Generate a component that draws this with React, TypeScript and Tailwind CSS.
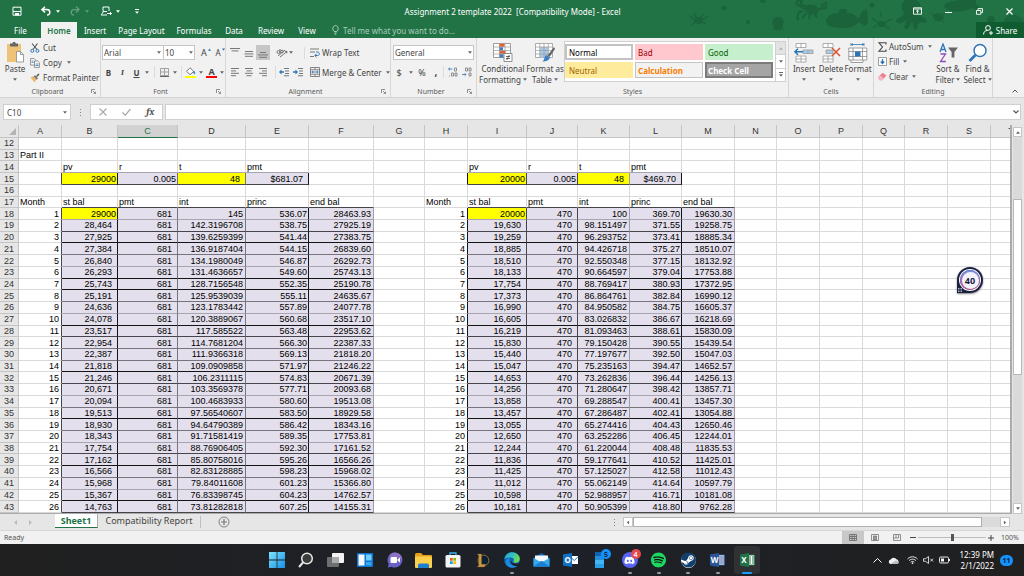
import React from "react";
import { FaSpotify, FaSteam, FaDiscord } from "react-icons/fa";

type Tone = "none" | "light" | "mid" | "dark" | "black";

/* ---------- shared bits ---------- */

const Caret = ({ className = "" }: { className?: string }) => (
  <svg viewBox="0 0 5 3" className={"h-[3px] w-[4px] shrink-0 " + className} aria-hidden="true">
    <path d="M0 0h5L2.5 3z" fill="#666" />
  </svg>
);

const Launcher = () => (
  <svg viewBox="0 0 5 5" className="size-[5px] shrink-0" fill="none" stroke="#777" strokeWidth="0.8" aria-hidden="true">
    <path d="M0.5 4V0.5H4M2 2l2.5 2.5M4.6 2.6v2h-2" />
  </svg>
);

const Group = ({
  label,
  className,
  launcher = false,
  children,
}: {
  label: string;
  className: string;
  launcher?: boolean;
  children: React.ReactNode;
}) => (
  <section
    aria-label={label}
    className={"flex shrink-0 flex-col border-r border-[#d6d6d6] " + className}
  >
    <div className="flex h-[48px] items-start">{children}</div>
    <div className="flex h-[11px] items-center px-1 text-[7px] text-[#5c5c5c]">
      <span className="flex-1 text-center">{label}</span>
      {launcher && <Launcher />}
    </div>
  </section>
);

const Lines = ({ widths, top = 0 }: { widths: [number, number][]; top?: number }) => (
  <svg viewBox="0 0 10 10" className="size-[10px]" aria-hidden="true">
    {widths.map(([x, w], i) => (
      <rect key={i} x={x} y={top + i * 2.4} width={w} height="1" fill="#777" />
    ))}
  </svg>
);

const Rule = () => <span className="h-3 w-px shrink-0 bg-[#dcdcdc]" />;

/* ---------- title bar ---------- */

const SeaLife = () => (
  <svg viewBox="0 0 334 38" className="h-[38px] w-[334px]" fill="#1a633b" aria-hidden="true">
    <path d="M4 19c3-3 7-3 9 0 0 4-2 5-4 5s-5-1-5-5z" />
    <path d="M4 19l-5-4M5 22l-3 3M13 19l5-3M12 22l4 2M6 17l-2-4M11 17l3-3" fill="none" stroke="#1a633b" strokeWidth="1.200" />
    <circle cx="34" cy="8" r="2.500" />
    <circle cx="58" cy="22" r="2" />
    <circle cx="73" cy="0" r="3" />
    <circle cx="108" cy="19" r="1.500" />
    <circle cx="144" cy="19" r="3" />
    <circle cx="182" cy="5" r="2.500" />
    <circle cx="227" cy="19" r="5" />
    <g transform="translate(-9 -2)">
      <path d="M124 12c0-5 4-6 8-5 5 1 7 5 5 8s-11 2-13-3z" />
      <path d="M124 11l-9-5 2-4 4 1-2 3 7 3M137 11l8-1 0-5-4 2 1 4M122 13l-4 1-2 6M125 15l-4 6M129 16l-1 5M134 16l2 4" fill="none" stroke="#1a633b" strokeWidth="2" />
    </g>
    <path d="M84 28c-3-5-2-11 4-11s7 6 4 10l2 3-3-1-1 2-2-2-2 2-1-2-3 1z" />
    <path d="M136 21c0-6 8-8 12-8l2-4h7v4c7 0 9 4 12 5l3-7 5-1 1 13-3 3-6-4c-5 5-10 6-16 6-10 0-17-2-17-7z" />
    <path d="M187 23c3-3 7-2 9 0 0 3-3 4-4 4s-4 0-5-4z" />
    <path d="M187 22l-5-4M196 22l6-3M187 25l-4 3M195 26l5 3M191 17v-5" fill="none" stroke="#1a633b" strokeWidth="1.200" />
    <path d="M214 13c-5-8-1-14 7-14s12 6 8 13c1 6 7 5 8 9-2 4-8 0-10-1 1 4 1 8-1 10-3-1-3-6-4-9-2 4-3 9-7 8-2-3 1-6 2-10-4 4-9 6-11 2 1-4 7-3 8-8z" />
    <path d="M243 16c4-4 9-2 10 1s-4 5-7 3zM244 16l-4-4M252 15l5-3M246 20l-3 3M251 20l4 3" stroke="#1a633b" strokeWidth="1" />
    <path d="M254 6c2-4 8-5 12-5l3-4h12c4 1 6 4 5 7l4 3-3 3-6-2c-6 5-24 5-27-2z" />
    <circle cx="301" cy="20" r="4" />
    <path d="M314 20c3-6 11-7 16-3 5 3 6 10 5 19h-15c-6-4-9-10-6-16z" opacity=".8" />
  </svg>
);

const TitleBar = () => (
  <header className="relative h-[38px] shrink-0 bg-[#217346] text-white">
    <div className="absolute top-0 right-0 overflow-hidden">
      <SeaLife />
    </div>
    <div className="relative flex h-[22px] items-center">
      <div className="flex flex-1 items-center pl-[12px]">
        <button aria-label="Save" className="size-[10px]">
          <svg viewBox="0 0 10 10" fill="none" stroke="#fff" strokeWidth="1">
            <path d="M1 1.2h8v8H1z M1 5.5h8" />
            <path d="M3 7h4v2.4H3z" fill="#fff" stroke="none" />
          </svg>
        </button>
        <button aria-label="Undo" className="ml-[19px] h-[10px] w-[10px]">
          <svg viewBox="0 0 10 10" fill="none" stroke="#fff" strokeWidth="1.5">
            <path d="M4 0.8L1 3.6l3 2.8M1.2 3.6h4.6c4 0 4 5.4.2 5.4" />
          </svg>
        </button>
        <svg viewBox="0 0 5 3" className="ml-[5px] h-[3px] w-[4px]"><path d="M0 0h5L2.5 3z" fill="#fff" /></svg>
        <button aria-label="Redo" className="ml-[10px] size-[10px] opacity-30">
          <svg viewBox="0 0 10 10" fill="none" stroke="#fff" strokeWidth="1.4">
            <path d="M6 0.8l3 2.8-3 2.8M8.800 3.600H4.200c-4 0-4 5.400-.2 5.400" />
          </svg>
        </button>
        <svg viewBox="0 0 5 3" className="ml-[5px] h-[3px] w-[4px] opacity-30"><path d="M0 0h5L2.5 3z" fill="#fff" /></svg>
        <button aria-label="Touch mode" className="ml-[12px] h-[10px] w-[11px]">
          <svg viewBox="0 0 11 10" fill="none" stroke="#fff" strokeWidth="1">
            <path d="M2 5.500V1h6v4M2 5.500h4M0.500 8.500l2-3M0 9h6M6 7.500h4.500M9 6l1.500 1.500L9 9" />
          </svg>
        </button>
        <svg viewBox="0 0 5 3" className="ml-[4px] h-[3px] w-[4px]"><path d="M0 0h5L2.5 3z" fill="#fff" /></svg>
        <svg viewBox="0 0 4 5" className="ml-[15px] h-[5px] w-[4px]"><path d="M0 0h4v1H0zM0 2.500h4L2 4.800z" fill="#fff" /></svg>
      </div>
      <h1 className="text-[8px] whitespace-pre">Assignment 2 template 2022  [Compatibility Mode] - Excel</h1>
      <div className="flex flex-1 items-center justify-end pr-[11px]">
        <button aria-label="Ribbon display options" className="h-[8px] w-[9px]">
          <svg viewBox="0 0 9 8" fill="none" stroke="#fff" strokeWidth="0.9">
            <path d="M0.5 0.8h8v6.4h-8zM0.5 2h8M4.5 6.5V3.4M3 4.6l1.500-1.400L6 4.600" />
          </svg>
        </button>
        <button aria-label="Minimize" className="ml-[23px] h-[8px] w-[7px]">
          <svg viewBox="0 0 7 8"><path d="M0 5h7v1H0z" fill="#fff" /></svg>
        </button>
        <button aria-label="Restore" className="ml-[24px] size-[7px]">
          <svg viewBox="0 0 7 7" fill="none" stroke="#fff" strokeWidth="0.9">
            <path d="M0.500 2.500h4.300v3.800H0.500zM2 2.400V.6h4.500v4H5" />
          </svg>
        </button>
        <button aria-label="Close" className="ml-[23px] size-[7px]">
          <svg viewBox="0 0 7 7" stroke="#fff" strokeWidth="1.200"><path d="M.5.5l6 6M6.500.5l-6 6" /></svg>
        </button>
      </div>
    </div>
    <nav aria-label="Ribbon tabs" className="relative flex h-[16px] items-stretch text-[8px]">
      <button className="w-[41px]">File</button>
      <button className="w-[36px] bg-[#f1f1f1] font-semibold text-[#217346]">Home</button>
      <button className="w-[36px]">Insert</button>
      <button className="w-[57px]">Page Layout</button>
      <button className="w-[48px]">Formulas</button>
      <button className="w-[32px]">Data</button>
      <button className="w-[42px]">Review</button>
      <button className="w-[30px]">View</button>
      <button className="ml-[10px] flex items-center gap-[4px] text-[#a9cdb8]">
        <svg viewBox="0 0 7 10" className="h-[10px] w-[7px]" fill="none" stroke="#b5d5c2" strokeWidth="0.9">
          <path d="M2.200 6.500C.2 5 .3.600 3.500.600s3.300 4.400 1.300 5.900zM2.300 8h2.400M2.800 9.300h1.400" />
        </svg>
        Tell me what you want to do...
      </button>
      <button className="ml-auto flex w-[48px] items-center justify-center gap-[3px] bg-[#0f5c30]">
        <svg viewBox="0 0 10 10" className="size-[10px]" fill="none" stroke="#fff" strokeWidth="1">
          <circle cx="5" cy="3" r="2.400" />
          <path d="M.6 9.500c0-2.600 1.500-4 3.600-4M6 8h4M8 6v4" />
        </svg>
        Share
      </button>
    </nav>
  </header>
);

/* ---------- ribbon ---------- */

const SmallButton = ({ icon, text, caret, gap = "gap-[3px]" }: { icon: React.ReactNode; text: string; caret?: boolean; gap?: string }) => (
  <button className={"flex h-[15px] items-center whitespace-nowrap " + gap}>
    {icon}
    <span>{text}</span>
    {caret && <Caret className="ml-[2px]" />}
  </button>
);

const BigButton = ({ icon, lines, className, caretBelow = false }: { icon: React.ReactNode; lines: string[]; className: string; caretBelow?: boolean }) => (
  <button className={"flex shrink-0 flex-col items-center pt-[4px] whitespace-nowrap " + className}>
    <span className="flex h-[21px] items-center">{icon}</span>
    <span className="leading-[11px]">{lines[0]}</span>
    {caretBelow ? (
      <Caret className="mt-[4px]" />
    ) : (
      <span className="flex items-center gap-[2px] leading-[11px]">
        {lines[1]}
        <Caret />
      </span>
    )}
  </button>
);

const Ribbon = () => (
  <div className="flex h-[60px] shrink-0 overflow-hidden border-b border-[#d2d2d2] bg-[#f1f1f1] text-[8px] text-[#444]">
    <Group label="Clipboard" className="w-[101px]" launcher>
      <BigButton
        className="w-[30px]"
        lines={["Paste"]}
        caretBelow
        icon={
          <svg viewBox="0 0 20 21" className="h-[21px] w-[20px]">
            <rect x="2" y="2" width="14" height="18" fill="#eec377" />
            <path d="M5 1.500h2.500a1.600 1.600 0 0 1 3.200 0H13v3H5z" fill="#666" />
            <path d="M11.500 9.500h4l3 3v7.500h-7z" fill="#fff" stroke="#888" strokeWidth=".8" />
            <path d="M15.500 9.500v3h3" fill="none" stroke="#888" strokeWidth=".8" />
          </svg>
        }
      />
      <div className="flex flex-col pt-[2px]">
        <SmallButton
          text="Cut"
          icon={
            <svg viewBox="0 0 10 10" className="size-[10px]" fill="none">
              <path d="M2 .5l5 6M7.500.5L3 6.500" stroke="#555" strokeWidth="1.100" />
              <circle cx="2.300" cy="7.800" r="1.500" stroke="#2e75b6" />
              <circle cx="7.400" cy="7.800" r="1.500" stroke="#2e75b6" />
            </svg>
          }
        />
        <SmallButton
          text="Copy"
          caret
          icon={
            <svg viewBox="0 0 10 10" className="size-[10px]" fill="#fff" strokeWidth=".8">
              <path d="M.6.600h3.500l1.500 1.500v5H.6z" stroke="#777" />
              <path d="M4.500 3h3.200l1.700 1.700v4.700H4.500z" stroke="#777" />
              <path d="M5.500 6h3M5.500 7.500h3M1.600 3h2M1.600 4.500h2" stroke="#2e75b6" />
            </svg>
          }
        />
        <SmallButton
          text="Format Painter"
          icon={
            <svg viewBox="0 0 10 10" className="size-[10px]">
              <path d="M.5 4.500l3-1.200 3 3L4.500 9.500z" fill="#edb867" />
              <path d="M3.500 3.200l1.500-1 3 3-1.300 1.600z" fill="#777" />
              <path d="M6.500 3.500L9 1" stroke="#555" strokeWidth="1.500" />
            </svg>
          }
        />
      </div>
    </Group>

    <Group label="Font" className="w-[125px]" launcher>
      <div className="flex flex-col pt-[7px] pl-px">
        <div className="flex h-[15px]">
          <label className="relative flex">
            <select aria-label="Font" className="w-[62px] appearance-none border border-[#c6c6c6] bg-white px-px">
              <option>Arial</option>
            </select>
            <Caret className="absolute top-[6px] right-[3px]" />
          </label>
          <label className="relative flex">
            <select aria-label="Font size" className="w-[31px] appearance-none border border-l-0 border-[#c6c6c6] bg-white px-px">
              <option>10</option>
            </select>
            <Caret className="absolute top-[6px] right-[2px]" />
          </label>
          <button aria-label="Increase font size" className="ml-[5px] w-[8px] text-[9px]">A</button>
          <svg viewBox="0 0 4 3" className="mt-[3px] h-[3px] w-[3px]"><path d="M0 3l2-3 2 3z" fill="#2e75b6" /></svg>
          <button aria-label="Decrease font size" className="ml-[3px] w-[8px] text-[8px]">A</button>
          <svg viewBox="0 0 4 3" className="mt-[3px] h-[3px] w-[3px]"><path d="M0 0h4L2 3z" fill="#2e75b6" /></svg>
        </div>
        <div className="mt-[4px] flex h-[16px] items-center">
          <button className="w-[13px] font-bold">B</button>
          <button className="w-[15px] font-serif font-bold italic">I</button>
          <button className="w-[13px] font-bold underline">U</button>
          <Caret className="ml-[2px]" />
          <span className="w-[5px]" />
          <Rule />
          <button aria-label="Borders" className="ml-[5px]">
            <svg viewBox="0 0 9 9" className="size-[9px]" fill="none" stroke="#999" strokeWidth=".9">
              <path d="M.5.5h8v7h-8zM4.500.5v7M.5 4h8" /><path d="M0 8.500h9" stroke="#555" />
            </svg>
          </button>
          <Caret className="mx-[4px]" />
          <Rule />
          <button aria-label="Fill color" className="ml-[3px]">
            <svg viewBox="0 0 11 11" className="size-[11px]">
              <path d="M5 .8l3.800 3.700L5 7.600 1.500 4.300z" fill="#fff" stroke="#555" strokeWidth=".8" />
              <path d="M8.800 4c1 1 1.400 2.200.6 3-1-.5-1-2-.6-3z" fill="#2e75b6" stroke="#2e75b6" strokeWidth=".6" />
              <rect y="9" width="11" height="2" fill="#ff0" />
            </svg>
          </button>
          <Caret className="mx-[3px]" />
          <button aria-label="Font color" className="flex h-[11px] w-[11px] items-center justify-center border-b-2 border-[#f00] text-[9px] leading-[9px] font-bold">A</button>
          <Caret className="ml-[3px]" />
        </div>
      </div>
    </Group>

    <Group label="Alignment" className="w-[165px]" launcher>
      <div className="flex w-full flex-col pt-[7px] pl-[2px]">
        <div className="flex h-[15px] items-center">
          <button aria-label="Top align" className="flex w-[14px] justify-center"><Lines widths={[[0, 10], [1.5, 7]]} /></button>
          <button aria-label="Middle align" className="flex w-[14px] justify-center"><Lines top={3} widths={[[1, 8], [0.5, 9], [1, 8]]} /></button>
          <button aria-label="Bottom align" className="flex h-[15px] w-[14px] items-center justify-center bg-[#c6c6c6]"><Lines top={4} widths={[[2, 6], [0, 10], [1, 8]]} /></button>
          <button aria-label="Orientation" className="ml-[6px]">
            <svg viewBox="0 0 12 10" className="h-[10px] w-[12px]" fill="none" stroke="#666" strokeWidth=".9">
              <circle cx="2.500" cy="4" r="1.500" /><circle cx="6" cy="3.500" r="1.300" /><path d="M4 1v4.500M4 9L11 3.500M8.800 3.400L11 3.300l-.3 2M2 8l7-6" />
            </svg>
          </button>
          <Caret className="ml-px" />
          <span className="w-[11px]" />
          <Rule />
          <span className="ml-[5px]">
            <SmallButton
              gap="gap-[2px]"
              text="Wrap Text"
              icon={
                <svg viewBox="0 0 10 10" className="size-[10px]" fill="none" strokeWidth="1">
                  <path d="M0 1h9M0 4h5M0 8.500h4" stroke="#777" />
                  <path d="M6 4h1.500c2.500 0 2.500 3.500 0 3.500H5M6.500 5.800L4.800 7.500l1.700 1.700" stroke="#2e75b6" />
                </svg>
              }
            />
          </span>
        </div>
        <div className="mt-[4px] flex h-[16px] items-center">
          <button aria-label="Align left" className="flex w-[14px] justify-center"><Lines top={1} widths={[[1, 8], [1, 5], [1, 8], [1, 5]]} /></button>
          <button aria-label="Center" className="flex w-[14px] justify-center"><Lines top={1} widths={[[1, 8], [2.500, 5], [1, 8], [2.500, 5]]} /></button>
          <button aria-label="Align right" className="flex w-[14px] justify-center"><Lines top={1} widths={[[1, 8], [4, 5], [1, 8], [4, 5]]} /></button>
          <span className="w-[5px]" />
          <Rule />
          <button aria-label="Decrease indent" className="ml-[3px]">
            <svg viewBox="0 0 10 10" className="size-[10px]"><path d="M5 1h5v1H5zM6 3.500h4v1H6zM6 6h4v1H6zM5 8.300h5v1H5z" fill="#777" /><path d="M0 5l2.500-2.500v1.700H5v1.600H2.500v1.700z" fill="#2e75b6" /></svg>
          </button>
          <button aria-label="Increase indent" className="ml-[4px]">
            <svg viewBox="0 0 10 10" className="size-[10px]"><path d="M5 1h5v1H5zM6 3.500h4v1H6zM6 6h4v1H6zM5 8.300h5v1H5z" fill="#777" /><path d="M5 5L2.500 2.500v1.700H0v1.600h2.500v1.700z" fill="#2e75b6" /></svg>
          </button>
          <span className="ml-[7px]">
            <SmallButton
              gap="gap-[2px]"
              text="Merge & Center"
              caret
              icon={
                <svg viewBox="0 0 10 10" className="size-[10px]" fill="none" stroke="#777" strokeWidth=".9">
                  <path d="M.5.5h9v9h-9zM.5 2.800h9M.5 7.200h9M5 .5v2.300M5 7.200v2.300" />
                  <path d="M1.800 5h6.400M3 3.900L1.800 5 3 6.100M7 3.900L8.200 5 7 6.100" stroke="#2e75b6" />
                </svg>
              }
            />
          </span>
        </div>
      </div>
    </Group>

    <Group label="Number" className="w-[86px]" launcher>
      <div className="flex flex-col pt-[7px] pl-[2px]">
        <label className="relative flex h-[15px]">
          <select aria-label="Number format" className="w-[81px] appearance-none border border-[#c6c6c6] bg-white px-px">
            <option>General</option>
          </select>
          <Caret className="absolute top-[6px] right-[2px]" />
        </label>
        <div className="mt-[4px] flex h-[16px] items-center text-[9px]">
          <button className="w-[12px]">$</button>
          <Caret className="ml-[4px]" />
          <button className="ml-[4px] w-[10px]">%</button>
          <button className="ml-[3px] w-[12px] text-[10px] leading-[10px] font-bold">,</button>
          <span className="w-px" />
          <Rule />
          <button aria-label="Increase decimal" className="ml-[4px]">
            <svg viewBox="0 0 10 10" className="size-[10px]" fill="none" strokeWidth=".8"><path d="M4.500 2H.5M2 .7L.6 2 2 3.300" stroke="#2e75b6" /><path d="M6.500 1h2v3h-2zM3.500 6h2v3h-2zM7 6h2v3H7zM1.500 8.500v1" stroke="#777" /></svg>
          </button>
          <button aria-label="Decrease decimal" className="ml-[4px]">
            <svg viewBox="0 0 10 10" className="size-[10px]" fill="none" strokeWidth=".8"><path d="M0 7.500h4M2.700 6.200L4 7.500 2.700 8.800" stroke="#2e75b6" /><path d="M3.500 1h2v3h-2zM7 1h2v3H7zM7 6h2v3H7z" stroke="#777" /></svg>
          </button>
        </div>
      </div>
    </Group>

    <Group label="Styles" className="w-[312px]">
      <BigButton
        className="ml-[3px] w-[46px]"
        lines={["Conditional", "Formatting"]}
        icon={
          <svg viewBox="0 0 20 19" className="h-[19px] w-[20px]">
            <path d="M.5.5h17v14H.5z" fill="#fff" stroke="#888" strokeWidth=".8" />
            <path d="M.5 4h17M.5 7.500h17M.5 11h17M6.500.5v14M12 .5v14" stroke="#999" strokeWidth=".7" />
            <path d="M6.500.8h5v3h-5zM6.500 7.800h6v3h-6z" fill="#d9643a" />
            <path d="M6.500 4.200h3.500v3H6.500zM6.500 11.200h4v3.200h-4z" fill="#3f7ec2" />
            <path d="M11 10.500h8v8h-8z" fill="#fff" stroke="#777" strokeWidth=".8" />
            <path d="M13 13.500h4M13 15.500h4M16.300 12l-2.500 5" stroke="#444" strokeWidth=".8" />
          </svg>
        }
      />
      <BigButton
        className="w-[38px]"
        lines={["Format as", "Table"]}
        icon={
          <svg viewBox="0 0 20 19" className="h-[19px] w-[20px]">
            <path d="M.5.5h17v14H.5z" fill="#fff" stroke="#999" strokeWidth=".8" />
            <path d="M4.800 4h8.500v10.500H4.800z" fill="#a9cbea" />
            <path d="M.5 4h17M.5 7.500h17M.5 11h17M4.800.5v14M9 .5v14M13.300.5v14" stroke="#999" strokeWidth=".7" />
            <path d="M19 4l-6.500 8.500 2 1.500L20 6z" fill="#666" />
            <path d="M11 12l4 2.500c-1 3-4 4-7.500 4 2-1.500 1.500-4.500 3.500-6.500z" fill="#3f7ec2" />
          </svg>
        }
      />
      <div className="mt-[3px] flex h-[41px] border border-[#d0d0d0] bg-white">
        <div className="grid grid-cols-[68px_68px_68px] grid-rows-[16px_16px] gap-x-[2px] gap-y-[2px] pt-[2px]">
          <button className="border-2 border-[#c3c3c3] bg-white px-[2px] text-left text-black">Normal</button>
          <button className="bg-[#ffc7ce] px-[3px] text-left text-[#9c0006]">Bad</button>
          <button className="bg-[#c6efce] px-[3px] text-left text-[#006100]">Good</button>
          <button className="bg-[#ffeb9c] px-[4px] text-left text-[#9c6500]">Neutral</button>
          <button className="border border-[#c3c3c3] bg-[#f2f2f2] px-[2px] text-left font-bold text-[#fa7d00]">Calculation</button>
          <button className="border-2 border-[#7b7b7b] bg-[#a5a5a5] px-px text-left font-bold text-white">Check Cell</button>
        </div>
        <div className="ml-[2px] flex w-[10px] flex-col border-l border-[#d0d0d0]">
          <button aria-label="Scroll up" className="flex flex-1 items-center justify-center bg-[#e3e3e3]"><Caret className="rotate-180 opacity-40" /></button>
          <button aria-label="Scroll down" className="flex flex-1 items-center justify-center border-y border-[#d0d0d0]"><Caret /></button>
          <button aria-label="More styles" className="flex flex-1 flex-col items-center justify-center gap-px"><span className="h-px w-[4px] bg-[#666]" /><Caret /></button>
        </div>
      </div>
    </Group>

    <Group label="Cells" className="w-[85px]">
      <BigButton
        className="ml-[2px] w-[26px]"
        lines={["Insert"]}
        caretBelow
        icon={
          <svg viewBox="0 0 20 20" className="size-[20px]" fill="#fff" stroke="#999" strokeWidth=".8">
            <path d="M2 .5h10v4H2zM7 .5v4M2 13h10v6H2zM7 13v6M2 16h10" />
            <path d="M9 7h10v3.500H9z" fill="#a9cbea" /><path d="M14 7v3.500" />
            <path d="M.8 8.700H9M4 5.700L.8 8.700 4 11.700" fill="none" stroke="#2e75b6" strokeWidth="1.500" />
          </svg>
        }
      />
      <BigButton
        className="w-[28px]"
        lines={["Delete"]}
        caretBelow
        icon={
          <svg viewBox="0 0 20 20" className="size-[20px]" fill="#fff" stroke="#999" strokeWidth=".8">
            <path d="M2 .5h10v4H2zM7 .5v4M2 13h10v6H2zM7 13v6M2 16h10" />
            <path d="M5 7h7v3.500H5z" fill="#a9cbea" />
            <path d="M11 5l8 8M19 5l-8 8" fill="none" stroke="#d9532c" strokeWidth="1.500" />
          </svg>
        }
      />
      <BigButton
        className="w-[26px]"
        lines={["Format"]}
        caretBelow
        icon={
          <svg viewBox="0 0 20 20" className="size-[20px]" fill="#fff" stroke="#888" strokeWidth=".8">
            <path d="M.8 5h18v12H.8zM.8 8.500h18M.8 13.500h18M5 5v12M14.500 5v12M3 17v2.500h12V17" />
            <path d="M7 8.500h5.500v5H7z" fill="#2e75b6" stroke="none" />
            <path d="M3 1.500h13M3 0v3M16 0v3M5 .5l-1.500 1L5 2.500M14 .5l1.500 1-1.500 1" fill="none" stroke="#2e75b6" />
          </svg>
        }
      />
    </Group>

    <Group label="Editing" className="w-[119px]">
      <div className="ml-[4px] flex w-[55px] flex-col pt-px">
        <SmallButton
          text="AutoSum"
          caret
          gap="gap-[2px]"
          icon={<svg viewBox="0 0 9 10" className="h-[10px] w-[9px]" fill="none" stroke="#444" strokeWidth="1.100"><path d="M8 2.500V.8H1l3.500 4.200L1 9.200h7V7.500" /></svg>}
        />
        <SmallButton
          text="Fill"
          caret
          gap="gap-[2px]"
          icon={<svg viewBox="0 0 9 9" className="size-[9px]" fill="#fff" stroke="#888" strokeWidth=".8"><path d="M.5.5h8v8h-8z" /><path d="M4.500 2v4M2.700 4.500l1.800 2 1.800-2" stroke="#2e75b6" strokeWidth="1.300" fill="none" /></svg>}
        />
        <SmallButton
          text="Clear"
          caret
          gap="gap-[2px]"
          icon={<svg viewBox="0 0 9 9" className="size-[9px]"><path d="M0 5.500L4.500.8 8.500 3.500 4 8.200H1.500z" fill="#ee7f93" /><path d="M0 5.500l2-2 4 3-2 1.700H1.500z" fill="#f7b9c3" /></svg>}
        />
      </div>
      <BigButton
        className="w-[30px]"
        lines={["Sort &", "Filter"]}
        icon={
          <svg viewBox="0 0 19 20" className="h-[20px] w-[19px]" fill="none">
            <path d="M1 9L4 1l3 8M2 6.500h4" stroke="#2e75b6" strokeWidth="1.300" />
            <path d="M1.500 11h5l-5 7.500h5.500" stroke="#8d4fb5" strokeWidth="1.300" />
            <path d="M9 4.500h10l-3.600 4.500v5.500h-2.800V9z" fill="#666" />
          </svg>
        }
      />
      <BigButton
        className="w-[29px]"
        lines={["Find &", "Select"]}
        icon={
          <svg viewBox="0 0 19 20" className="h-[20px] w-[19px]" fill="none" stroke="#2e75b6">
            <circle cx="12" cy="7.500" r="6" fill="#fff" strokeWidth="1.500" />
            <path d="M7.500 12L1.500 18" strokeWidth="2.600" />
          </svg>
        }
      />
    </Group>
    <button aria-label="Collapse the ribbon" className="ml-auto flex w-[12px] items-end pb-[4px]">
      <svg viewBox="0 0 6 4" className="h-[4px] w-[6px]" fill="none" stroke="#555" strokeWidth="1"><path d="M.5 3.500L3 1l2.500 2.500" /></svg>
    </button>
  </div>
);

const FormulaBar = () => (
  <div className="flex h-[27px] shrink-0 items-center bg-[#e6e6e6] px-[3px] pt-px text-[8px]">
    <label className="relative flex h-[16px]">
      <input aria-label="Name box" defaultValue="C10" className="w-[68px] border border-[#cfcfcf] bg-white px-[3px] text-[#444]" />
      <Caret className="absolute top-[7px] right-[4px]" />
    </label>
    <span className="mx-[9px] flex flex-col gap-[2px]">
      <i className="size-px bg-[#888]" /><i className="size-px bg-[#888]" /><i className="size-px bg-[#888]" />
    </span>
    <div className="flex h-[16px] w-[73px] items-center justify-around border border-[#cfcfcf] bg-white">
      <button aria-label="Cancel"><svg viewBox="0 0 8 8" className="size-[8px]" stroke="#aaa" strokeWidth="1.200"><path d="M.5.5l7 7M7.500.5l-7 7" /></svg></button>
      <button aria-label="Enter"><svg viewBox="0 0 9 8" className="h-[8px] w-[9px]" fill="none" stroke="#aaa" strokeWidth="1.300"><path d="M.5 4.500l2.800 2.700L8.500.8" /></svg></button>
      <button aria-label="Insert function" className="font-serif text-[10px] leading-[10px] font-bold text-[#555] italic">fx</button>
    </div>
    <label className="relative ml-[2px] flex h-[16px] flex-1">
      <input aria-label="Formula" className="w-full border border-[#cfcfcf] bg-white px-1" />
      <svg viewBox="0 0 6 4" className="absolute top-[6px] right-[2px] h-[4px] w-[6px]" fill="none" stroke="#555" strokeWidth="1.200"><path d="M.5.5L3 3 5.500.5" /></svg>
    </label>
  </div>
);

/* ---------- worksheet ---------- */

const COLS = "ABCDEFGHIJKLMNOPQRST".split("");
const COL_WIDTHS = [
  "w-[43px]", "w-[56px]", "w-[60px]", "w-[68px]", "w-[63px]", "w-[65px]", "w-[51px]",
  "w-[43px]", "w-[59px]", "w-[51px]", "w-[52px]", "w-[52px]", "w-[53px]", "w-[42px]",
  "w-[43px]", "w-[43px]", "w-[42px]", "w-[43px]", "w-[43px]", "",
];
const FIRST_ROW = 12;
const LAST_ROW = 43;

type Cell = { text: string; className: string; boxed?: boolean };

const YELLOW = "bg-[#ffff00] text-right";
const LILAC = "bg-[#e4dfec] text-right";

function buildLoan(cells: Record<string, Cell>, principal: number, cols: string[], digits: number) {
  const [month, bal, pay, int, princ, end] = cols;
  const rate = 0.005;
  const pmt = (principal * rate) / (1 - Math.pow(1 + rate, -48));
  const label = (col: string, row: number, text: string) => {
    cells[col + row] = { text, className: "text-left pl-px" };
  };
  label(bal, 14, "pv");
  label(pay, 14, "r");
  label(int, 14, "t");
  label(princ, 14, "pmt");
  cells[bal + 15] = { text: String(principal), className: YELLOW + " pr-px", boxed: true };
  cells[pay + 15] = { text: "0.005", className: LILAC + " pr-px", boxed: true };
  cells[int + 15] = { text: "48", className: YELLOW + " pr-[5px]", boxed: true };
  cells[princ + 15] = { text: "$" + pmt.toFixed(2), className: LILAC + " pr-[5px]", boxed: true };
  label(month, 17, "Month");
  label(bal, 17, "st bal");
  label(pay, 17, "pmt");
  label(int, 17, "int");
  label(princ, 17, "princ");
  label(end, 17, "end bal");
  let balance = principal;
  for (let row = 18; row <= LAST_ROW; row++) {
    const interest = balance * rate;
    const first = row === 18;
    cells[month + row] = { text: String(row - 17), className: "text-right pr-[2px]" };
    cells[bal + row] = first
      ? { text: String(principal), className: YELLOW + " pr-px", boxed: true }
      : { text: Math.round(balance).toLocaleString("en-US"), className: LILAC + " pr-[5px]", boxed: true };
    cells[pay + row] = { text: String(Math.round(pmt)), className: LILAC + " pr-[5px]", boxed: true };
    cells[int + row] = { text: String(parseFloat(interest.toPrecision(digits))), className: LILAC + " pr-[2px]", boxed: true };
    cells[princ + row] = { text: (pmt - interest).toFixed(2), className: LILAC + " pr-px", boxed: true };
    balance = balance + interest - pmt;
    cells[end + row] = { text: balance.toFixed(2), className: LILAC + " pr-[2px]", boxed: true };
  }
}

const CELLS: Record<string, Cell> = { A13: { text: "Part II", className: "text-left pl-px" } };
buildLoan(CELLS, 29000, ["A", "B", "C", "D", "E", "F"], 10);
buildLoan(CELLS, 20000, ["H", "I", "J", "K", "L", "M"], 8);

const ROW_TONES: Record<string, Tone> = {
  14: "light", 15: "dark", 17: "dark", 18: "light", 19: "dark", 20: "black", 21: "mid", 22: "light",
  23: "black", 24: "black", 25: "mid", 26: "light", 27: "black", 28: "dark", 29: "mid", 30: "mid",
  31: "black", 32: "dark", 33: "light", 34: "mid", 35: "black", 36: "mid", 37: "light", 38: "dark",
  39: "black", 40: "mid", 41: "light", 42: "black", 43: "dark",
};
const COL_TONES: Record<string, Tone> = {
  A: "dark", B: "black", C: "mid", D: "mid", E: "black", F: "light",
  H: "black", I: "dark", J: "dark", K: "light", L: "black", M: "light",
};
const BOTTOM: Record<Tone, string> = {
  none: "border-b-[#dadada]",
  light: "border-b-[#a9a5b0]",
  mid: "border-b-[#77747d]",
  dark: "border-b-[#47454b]",
  black: "border-b-[#151515]",
};
const RIGHT: Record<Tone, string> = {
  none: "border-r-[#dadada]",
  light: "border-r-[#a19da8]",
  mid: "border-r-[#77747d]",
  dark: "border-r-[#47454b]",
  black: "border-r-[#151515]",
};

const Sheet = () => {
  const rows = Array.from({ length: LAST_ROW - FIRST_ROW + 1 }, (_, i) => FIRST_ROW + i);
  return (
    <div className="relative min-w-0 flex-1 overflow-hidden border-r-2 border-b border-[#ababab] bg-white">
      <table className="h-full w-[calc(100%+22px)] table-fixed border-separate border-spacing-0 font-['Liberation_Sans',Arial,sans-serif] text-[9px] leading-[10px] text-black">
        <colgroup>
          <col className="w-[19px]" />
          {COLS.map((c, i) => <col key={c} className={COL_WIDTHS[i]} />)}
        </colgroup>
        <thead>
          <tr className="h-[13px] bg-[#e6e6e6] text-[#333]">
            <th aria-label="Select all" className="h-[13px] border-r border-b border-[#c4c4c4] p-0">
              <svg viewBox="0 0 8 8" className="mr-[2px] ml-auto size-[7px]"><path d="M8 0v8H0z" fill="#b4b4b4" /></svg>
            </th>
            {COLS.map((c) => (
              <th
                key={c}
                className={
                  "h-[13px] overflow-hidden border-r border-b p-0 font-normal " +
                  (c === "C" ? "border-r-[#c4c4c4] border-b-[#217346] bg-[#d2d2d2] text-[#217346]" : "border-[#c4c4c4]")
                }
              >
                {c}
              </th>
            ))}
          </tr>
        </thead>
        <tbody>
          {rows.map((row) => (
            <tr key={row}>
              <th className="border-r border-b border-[#c4c4c4] bg-[#e6e6e6] p-0 text-center font-normal text-[#333]">{row}</th>
              {COLS.map((c, i) => {
                const cell = CELLS[c + row];
                const below = CELLS[c + (row + 1)];
                const next = CELLS[COLS[i + 1] + row];
                const bottom: Tone = cell?.boxed || below?.boxed ? ROW_TONES[row] : "none";
                const right: Tone = cell?.boxed || next?.boxed ? COL_TONES[c] ?? "dark" : "none";
                return (
                  <td key={c} className={"border-r border-b p-0 whitespace-nowrap " + BOTTOM[bottom] + " " + RIGHT[right] + " " + (cell?.className ?? "")}>
                    {cell?.text}
                  </td>
                );
              })}
            </tr>
          ))}
        </tbody>
      </table>
      <div className="absolute top-[142px] right-[27px] flex size-[26px] items-center justify-center rounded-full rounded-bl-[3px] bg-[#1c2140] shadow-[0_1px_2px_rgba(0,0,0,0.5)]">
        <span className="flex size-[20px] items-center justify-center rounded-full bg-gradient-to-b from-[#6b8ff0] to-[#c25790] ring-1 ring-white">
          <span className="flex size-[17px] items-center justify-center rounded-full bg-[#f4f3fb] text-[9px] font-bold text-[#1c2140]">40</span>
        </span>
        <svg viewBox="0 0 4 4" className="absolute bottom-px left-px size-[4px]"><path d="M0 0h1.500v1.500H0zM2.500 0H4v1.500H2.500zM0 2.500h1.500V4H0zM2.500 2.500H4V4H2.500z" fill="#aab0cf" /></svg>
      </div>
    </div>
  );
};

const VScroll = () => (
  <div className="flex w-[12px] shrink-0 flex-col bg-[#e6e6e6] pt-[2px] pr-[2px] pl-px">
    <button aria-label="Scroll up" className="flex h-[10px] items-center justify-center border border-[#c6c6c6] bg-white"><Caret className="rotate-180" /></button>
    <div className="flex flex-1 flex-col bg-[#dadada]">
      <div className="basis-[17%]" />
      <div className="basis-[48%] border border-[#b8b8b8] bg-white" />
    </div>
    <button aria-label="Scroll down" className="flex h-[11px] items-center justify-center border border-[#c6c6c6] bg-white"><Caret /></button>
  </div>
);

const SheetTabs = () => (
  <div className="flex h-[16px] shrink-0 items-stretch bg-[#e6e6e6] text-[9px] text-[#444]">
    <div className="flex w-[55px] items-center gap-[12px] pl-[14px]">
      <button aria-label="Previous sheet"><svg viewBox="0 0 3 5" className="h-[5px] w-[3px]"><path d="M3 0v5L0 2.500z" fill="#bbb" /></svg></button>
      <button aria-label="Next sheet"><svg viewBox="0 0 3 5" className="h-[5px] w-[3px]"><path d="M0 0v5l3-2.500z" fill="#bbb" /></svg></button>
    </div>
    <button className="mb-[2px] w-[43px] border-r border-b border-r-[#ababab] border-b-[#217346] bg-white leading-[12px] font-bold text-[#217346]">Sheet1</button>
    <button className="mb-[2px] w-[102px] leading-[12px]">Compatibility Report</button>
    <span className="my-[2px] w-px bg-[#c0c0c0]" />
    <button aria-label="New sheet" className="ml-[17px]">
      <svg viewBox="0 0 12 12" className="size-[12px]" fill="none" stroke="#777" strokeWidth=".9"><circle cx="6" cy="6" r="5" /><path d="M6 3v6M3 6h6" strokeWidth="1.200" /></svg>
    </button>
    <div className="ml-auto flex w-[40%] items-center pr-[14px]">
      <span className="mr-[8px] flex flex-col gap-[2px]"><i className="size-px bg-[#888]" /><i className="size-px bg-[#888]" /><i className="size-px bg-[#888]" /></span>
      <button aria-label="Scroll left" className="flex h-[10px] w-[10px] items-center justify-center border border-[#c6c6c6] bg-white"><Caret className="rotate-90" /></button>
      <div className="flex h-[10px] flex-1 bg-[#dadada]">
        <div className="basis-[95%] border border-[#b0b0b0] bg-white" />
      </div>
      <button aria-label="Scroll right" className="flex h-[10px] w-[10px] items-center justify-center border border-[#c6c6c6] bg-white"><Caret className="-rotate-90" /></button>
    </div>
  </div>
);

const StatusBar = () => (
  <footer className="flex h-[14px] shrink-0 items-center border-t border-[#d6d6d6] bg-[#f1f1f1] pr-[5px] pl-[4px] text-[7px] text-[#555]">
    <span>Ready</span>
    <div className="ml-auto flex h-full items-center">
      <button aria-label="Normal view" className="flex h-full w-[22px] items-center justify-center bg-[#c8c8c8]">
        <svg viewBox="0 0 8 7" className="h-[7px] w-[8px]" fill="none" stroke="#666" strokeWidth=".8"><path d="M.5.5h7v6h-7zM.5 2.500h7M.5 4.500h7M3 .5v6M5.300.5v6" /></svg>
      </button>
      <button aria-label="Page layout view" className="flex w-[22px] justify-center">
        <svg viewBox="0 0 8 7" className="h-[7px] w-[8px]" fill="none" stroke="#777" strokeWidth=".8"><path d="M.5.5h7v6h-7z" /><path d="M2.500 2h3v4h-3z" fill="#999" /></svg>
      </button>
      <button aria-label="Page break preview" className="flex w-[22px] justify-center">
        <svg viewBox="0 0 8 7" className="h-[7px] w-[8px]" fill="none" stroke="#777" strokeWidth=".8"><path d="M.5.5h7v6h-7zM3 .5V4M.5 4h5V.5" /></svg>
      </button>
      <button aria-label="Zoom out" className="ml-[2px] flex w-[6px] items-center"><span className="h-px w-full bg-[#444]" /></button>
      <div className="mx-[2px] flex h-[7px] w-[68px] items-center">
        <span className="h-px flex-1 bg-[#bdbdbd]" />
        <span className="h-[7px] w-[3px] bg-[#555]" />
        <span className="h-px flex-1 bg-[#bdbdbd]" />
      </div>
      <button aria-label="Zoom in"><svg viewBox="0 0 6 6" className="size-[6px]"><path d="M0 2.500h6v1H0zM2.500 0h1v6h-1z" fill="#444" /></svg></button>
      <span className="ml-[7px] w-[18px]">100%</span>
    </div>
  </footer>
);

/* ---------- taskbar ---------- */

const OfficeTile = ({ letter, color, light, grid }: { letter: string; color: string; light: string; grid?: boolean }) => (
  <span className="relative flex h-[14px] w-[15px] items-center">
    <svg viewBox="0 0 15 14" className="h-[14px] w-[15px]">
      <path d="M7 2h7.500v10H7z" fill="#fff" stroke={color} strokeWidth=".8" />
      <path d={grid ? "M9 4h2M12 4h2M9 6h2M12 6h2M9 8h2M12 8h2M9 10h2M12 10h2" : "M9 4h5M9 6h5M9 8h5M9 10h5"} stroke={light} strokeWidth="1.200" />
      <path d="M0 1.500L9 0v14l-9-1.500z" fill={color} />
    </svg>
    <b className="absolute inset-y-0 left-0 w-[9px] text-center text-[8px] leading-[14px] text-white">{letter}</b>
  </span>
);

const APPS: { name: string; icon: React.ReactNode; running?: boolean; active?: boolean; badge?: { text: string; className: string } }[] = [
  {
    name: "Start",
    icon: (
      <svg viewBox="0 0 16 16" className="size-[16px]">
        <defs><linearGradient id="win" x1="0" y1="0" x2="1" y2="1"><stop stopColor="#7fe3fb" /><stop offset="1" stopColor="#1490e8" /></linearGradient></defs>
        <path d="M0 0h7.600v7.600H0zM8.400 0H16v7.600H8.400zM0 8.400h7.600V16H0zM8.400 8.400H16V16H8.400z" fill="url(#win)" />
      </svg>
    ),
  },
  {
    name: "Search",
    icon: <svg viewBox="0 0 16 16" className="size-[16px]" fill="#3c3c3c" stroke="#e8e8e8" strokeWidth="1.500"><circle cx="9" cy="6.500" r="5.300" /><path d="M5 10.500L1 15" strokeWidth="2" /></svg>,
  },
  {
    name: "Task view",
    icon: <svg viewBox="0 0 17 16" className="h-[16px] w-[17px]"><rect x="5" y="1" width="12" height="10" rx="1" fill="#f2f2f2" /><rect x="0" y="5" width="12" height="10" rx="1" fill="#777" opacity=".9" /><path d="M5 5h7v6H5z" fill="#aaa" /></svg>,
  },
  {
    name: "Widgets",
    icon: <svg viewBox="0 0 16 16" className="size-[16px]"><rect y="1" width="16" height="14" rx="1" fill="#0f74cf" /><path d="M1.500 2.500h6v11h-6z" fill="#f5f9fd" /><path d="M9 2.500h5.500v6H9z" fill="#6fd0ff" /><path d="M9 10h5.500v3.500H9z" fill="#36a8f2" /></svg>,
  },
  {
    name: "Chat",
    icon: <svg viewBox="0 0 16 16" className="size-[16px]"><path d="M8 .5a7.500 7.500 0 1 1-3.500 14.200L.8 15.500l.9-3.500A7.500 7.500 0 0 1 8 .5z" fill="#6a62c8" /><path d="M8 .5a7.500 7.500 0 0 1 7.400 6.500L2 4C3.500 1.700 5.800.5 8 .5z" fill="#8d72c2" /><rect x="3.500" y="5" width="6.500" height="6" rx="1" fill="#fff" /><path d="M10.500 7.500l2.500-2v5l-2.500-2z" fill="#fff" /></svg>,
  },
  {
    name: "File Explorer",
    icon: <svg viewBox="0 0 17 15" className="h-[15px] w-[17px]"><path d="M0 1.500Q0 0 1.500 0H6l2 2h8q1 0 1 1v4H0z" fill="#e79f1c" /><rect y="3.500" width="17" height="11.500" rx="1" fill="#fbcf4b" /><path d="M3 15v-3q0-1.500 1.500-1.500h8q1.500 0 1.500 1.500v3z" fill="#1d7fd0" /></svg>,
  },
  {
    name: "Microsoft Store",
    icon: <svg viewBox="0 0 16 16" className="size-[16px]"><path d="M5 3.500V1h6v2.500" fill="none" stroke="#3db2ea" strokeWidth="1.300" /><rect x=".5" y="3" width="15" height="12.500" rx="1.500" fill="#f4f4f4" /><path d="M5 6h2.700v2.700H5z" fill="#f25022" /><path d="M8.300 6H11v2.700H8.300z" fill="#7fba00" /><path d="M5 9.300h2.700V12H5z" fill="#00a4ef" /><path d="M8.300 9.300H11V12H8.300z" fill="#ffb900" /></svg>,
  },
  {
    name: "League of Legends",
    icon: <svg viewBox="0 0 16 16" className="size-[15px]"><circle cx="9" cy="8" r="5.800" fill="#0b2231" stroke="#b98a3e" strokeWidth=".8" /><path d="M2.500 1h4.500v11h4.500l-1.500 3H2.500L4 13V3z" fill="#c99848" stroke="#7d5520" strokeWidth=".4" /></svg>,
  },
  {
    name: "Microsoft Edge",
    running: true,
    icon: (
      <svg viewBox="0 0 16 16" className="size-[16px]">
        <defs>
          <linearGradient id="edge" x1="0" y1="0" x2="1" y2=".4"><stop stopColor="#1fa5e0" /><stop offset=".6" stopColor="#36c5b5" /><stop offset="1" stopColor="#6fda4f" /></linearGradient>
        </defs>
        <circle cx="8" cy="8" r="7.800" fill="#0f62b8" />
        <path d="M.3 7C1 3 4 .2 8 .2c4.500 0 7.800 3 7.800 6.600 0 2.500-2 3.900-4.200 3.900-1.500 0-2.500-.6-2.200-1.200 1-1.700.3-4-2.400-4C4 5.500 1 6 .3 7z" fill="url(#edge)" />
        <path d="M6 6c-2 3-.5 7.500 4 8 2 .2 3.800-.6 4.700-1.500-2 3.500-8 4.500-11.500 1C.5 11 1 6.800 6 6z" fill="#1b8ddf" />
        <path d="M7.300 8.500c0 2.500 2.500 4 8.500 2.500l.2 2.500-2.500.5C10 14.500 7 12 6.800 10c0-.6.200-1.100.5-1.500z" fill="#1f1f1f" />
      </svg>
    ),
  },
  {
    name: "Mail",
    icon: <svg viewBox="0 0 17 14" className="h-[14px] w-[17px]"><path d="M.5 5L8.500 0l8 5v8.500H.5z" fill="#1467b8" /><path d="M2 2.500h13v6H2z" fill="#f3f8fd" /><path d="M.5 5l8 4.500 8-4.500v8.500H.5z" fill="#35a8ee" /><path d="M.5 13.500L8.500 8l8 5.500z" fill="#1b7fd1" /></svg>,
  },
  {
    name: "Outlook",
    icon: (
      <span className="relative flex h-[14px] w-[15px] items-center">
        <svg viewBox="0 0 15 14" className="h-[14px] w-[15px]"><path d="M7 3h8v8H7z" fill="#fff" /><path d="M7.500 4l3.700 3.500L14.800 4" fill="none" stroke="#1072c6" /><path d="M0 1.500L9 0v14l-9-1.500z" fill="#1072c6" /></svg>
        <b className="absolute inset-y-0 left-0 w-[9px] text-center text-[8px] leading-[14px] text-white">O</b>
      </span>
    ),
  },
  {
    name: "Your Phone",
    badge: { text: "5", className: "bg-[#1491ff] text-[#101010]" },
    icon: <svg viewBox="0 0 12 16" className="h-[16px] w-[12px]"><path d="M1 0h9v16H1z" fill="#0d63b1" /><path d="M1 4h9v4H1z" fill="#1f8fe0" /><path d="M1 8h9v8H1z" fill="#43b4f5" /><path d="M1 12h9v4H1z" fill="#2a9fe9" /></svg>,
  },
  {
    name: "Discord",
    running: true,
    badge: { text: "4", className: "bg-[#e5484d] text-white" },
    icon: <span className="flex size-[16px] items-center justify-center rounded-full bg-[#5865f2]"><FaDiscord className="size-[11px] text-white" /></span>,
  },
  { name: "Spotify", running: true, icon: <span className="flex size-[15px] items-center justify-center rounded-full bg-[#101010]"><FaSpotify className="size-[16px] text-[#1ed760]" /></span> },
  {
    name: "Steam",
    running: true,
    icon: <span className="flex size-[15px] items-center justify-center rounded-full bg-white"><FaSteam className="size-[16px] text-[#12406e]" /></span>,
  },
  { name: "Word", running: true, icon: <OfficeTile letter="W" color="#2b579a" light="#2b579a" /> },
  { name: "Excel", running: true, active: true, icon: <OfficeTile letter="X" color="#217346" light="#217346" grid /> },
];

const Taskbar = () => (
  <div className="relative flex h-[32px] shrink-0 items-center justify-center bg-gradient-to-r from-[#202020] via-[#1d2128] to-[#202020]">
    <nav aria-label="Taskbar" className="flex w-[496px] justify-between">
      {APPS.map((app) => (
        <button
          key={app.name}
          aria-label={app.name}
          className={"relative flex h-[28px] w-[26px] items-center justify-center rounded-[3px] " + (app.active ? "bg-[#2f3132]" : "")}
        >
          {app.icon}
          {app.badge && (
            <span className={"absolute top-[3px] right-[2px] flex size-[10px] items-center justify-center rounded-full text-[7px] font-semibold " + app.badge.className}>
              {app.badge.text}
            </span>
          )}
          {app.running && (
            <span className={"absolute bottom-0 h-[2px] rounded-full " + (app.active ? "w-[10px] bg-[#1a9bff]" : "w-[4px] bg-[#9a9a9a]")} />
          )}
        </button>
      ))}
    </nav>
    <div className="absolute inset-y-0 right-[11px] flex items-center text-white">
      <svg viewBox="0 0 9 5" className="h-[5px] w-[9px]" fill="none" stroke="#fff"><path d="M.5 4.500l4-4 4 4" /></svg>
      <svg viewBox="0 0 11 7" className="ml-[6px] h-[7px] w-[11px]"><path d="M2.500 7a2.300 2.300 0 0 1 .2-4.500A3.300 3.300 0 0 1 8.500 2.300 2.400 2.400 0 0 1 8.700 7z" fill="#f0f0f0" /><path d="M2.500 7L8 3.500 11 5c0 1.300-1 2-2.300 2z" fill="#bbb" /></svg>
      <svg viewBox="0 0 11 8" className="ml-[8px] h-[8px] w-[11px]" fill="none" stroke="#fff" strokeWidth=".9"><path d="M.5 3c3-3 7-3 10 0M2 4.700c2-2 5-2 7 0M3.700 6.200c1-1 2.600-1 3.600 0" /><circle cx="5.500" cy="7.200" r=".5" fill="#fff" /></svg>
      <svg viewBox="0 0 11 8" className="ml-[5px] h-[8px] w-[11px]" fill="none" stroke="#fff" strokeWidth=".8"><path d="M.5 2.700h2L5.500.5v7L2.500 5.300h-2zM7.300 2.700l2.800 2.800M10.100 2.700L7.300 5.500" /></svg>
      <svg viewBox="0 0 11 8" className="ml-[5px] h-[8px] w-[11px]" fill="none" stroke="#fff" strokeWidth=".9"><rect x=".5" y="1" width="9" height="6" rx="1.200" /><path d="M10.500 3v2" /><path d="M2 2.500h3v3H2z" fill="#fff" stroke="none" /></svg>
      <div className="ml-[8px] w-[36px] text-right text-[8px] leading-[11px] whitespace-nowrap">
        <div>12:39 PM</div>
        <div>2/1/2022</div>
      </div>
      <span className="ml-[6px] flex h-[11px] w-[13px] items-center justify-center rounded-full bg-[#1491ff] text-[7px] font-bold text-[#0b2038]">11</span>
    </div>
  </div>
);

export default function App() {
  return (
    <div className="flex h-screen flex-col overflow-hidden bg-[#e6e6e6] font-['Noto_Sans','Open_Sans',sans-serif] text-[8px] leading-[11px]">
      <TitleBar />
      <Ribbon />
      <FormulaBar />
      <main className="flex min-h-0 flex-1">
        <Sheet />
        <VScroll />
      </main>
      <SheetTabs />
      <StatusBar />
      <Taskbar />
    </div>
  );
}
